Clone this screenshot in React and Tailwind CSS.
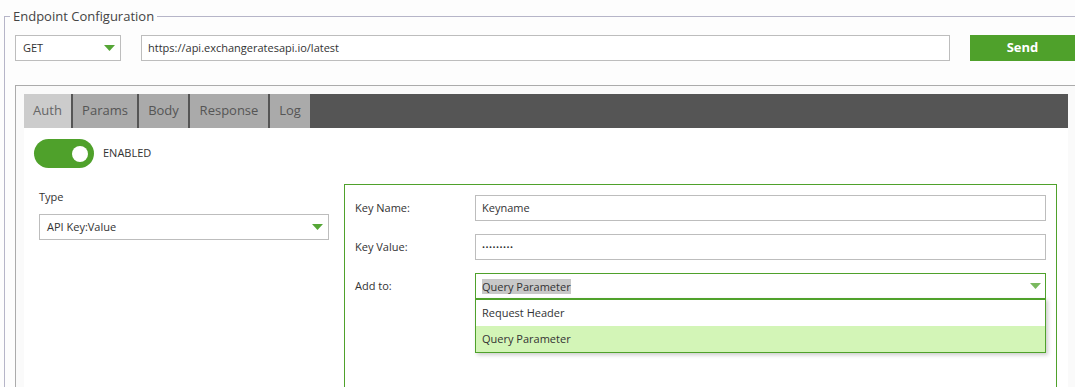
import React from 'react';

const Arrow = ({ className = 'fill-[#55a636]' }) => (
  <svg width="11" height="6" viewBox="0 0 11 6" className={className}>
    <path d="M0 0 H11 L5.5 6 Z" />
  </svg>
);

const Select = ({ value, width, arrow }) => (
  <div className={`flex items-center justify-between h-[26px] border border-[#bdbdbd] bg-white pl-[7px] pr-[5px] text-[11px] text-[#333] ${width}`}>
    <span>{value}</span>
    <Arrow className={arrow} />
  </div>
);

const tabs = [
  { label: 'Auth', w: 'w-[47px]', active: true },
  { label: 'Params', w: 'w-[64px]' },
  { label: 'Body', w: 'w-[49px]' },
  { label: 'Response', w: 'w-[78px]' },
  { label: 'Log', w: 'w-[40px]' },
];

export default function App() {
  return (
    <div className="h-[387px] w-[1075px] overflow-hidden bg-[#fdfdfd] text-[#333]" style={{ fontFamily: '"Open Sans", "Liberation Sans", sans-serif' }}>
      <fieldset className="mt-[7px] ml-[4px] w-[1110px] border border-[#b6b5c8]">
        <legend className="ml-[5px] px-[3px] text-[13px] leading-[18px] text-[#444]">Endpoint Configuration</legend>

        {/* Method / URL / Send */}
        <div className="mt-[10px] ml-[10px] flex gap-[20px]">
          <Select value="GET" width="w-[106px]" />
          <div className="flex h-[26px] w-[809px] items-center border border-[#bdbdbd] bg-white px-[6px] text-[11px]">
            https://api.exchangeratesapi.io/latest
          </div>
          <button className="h-[26px] w-[105px] bg-[#4fa12b] text-[13px] font-bold text-white">Send</button>
        </div>

        {/* Inner panel */}
        <div className="mt-[24px] ml-[10px] h-[400px] border-l border-t border-[#ababab] bg-[#fafafa] pt-[8px] pl-[8px]">
          <div className="w-[1044px]">
            <div className="flex h-[34px] gap-[2px] bg-[#555]">
              {tabs.map((t) => (
                <div
                  key={t.label}
                  className={`flex items-center justify-center text-[13px] ${t.w} ${t.active ? 'bg-[#cccccc] text-[#666]' : 'bg-[#aaaaaa] text-[#555]'}`}
                >
                  {t.label}
                </div>
              ))}
            </div>

            <div className="h-[300px] bg-white">
              {/* Toggle */}
              <div className="flex items-center pl-[10px] pt-[11px]">
                <div className="flex h-[29px] w-[60px] items-center justify-end rounded-full bg-[#4fa12b] pr-[6px]">
                  <div className="h-[16px] w-[16px] rounded-full bg-white" />
                </div>
                <span className="ml-[9px] text-[11px] text-[#333]">ENABLED</span>
              </div>

              <div className="mt-[16px] flex">
                {/* Type */}
                <div className="ml-[15px] w-[290px] pt-[4px]">
                  <div className="text-[11px] leading-[18px]">Type</div>
                  <div className="mt-[8px]">
                    <Select value="API Key:Value" width="w-[290px]" />
                  </div>
                </div>

                {/* Key config */}
                <div className="ml-[15px] h-[260px] w-[713px] border border-[#4fa12b] px-[10px] pt-[10px]">
                  <div className="flex flex-col gap-[13px]">
                    <div className="flex items-center">
                      <span className="w-[120px] text-[11px]">Key Name:</span>
                      <div className="flex h-[26px] flex-1 items-center border border-[#bdbdbd] px-[6px] text-[11px]">Keyname</div>
                    </div>
                    <div className="flex items-center">
                      <span className="w-[120px] text-[11px]">Key Value:</span>
                      <div className="flex h-[26px] flex-1 items-center border border-[#bdbdbd] px-[6px] text-[8px] tracking-[0.5px]">•••••••••</div>
                    </div>
                    <div className="flex items-center">
                      <span className="w-[120px] text-[11px]">Add to:</span>
                      <div className="relative flex-1">
                        <div className="flex h-[26px] items-center justify-between border border-[#4fa12b] pl-[6px] pr-[4px] text-[11px]">
                          <span className="bg-[#c8c8c8] leading-[15px]">Query Parameter</span>
                          <Arrow className="fill-[#7ab95f]" />
                        </div>
                        <div className="absolute left-0 right-0 top-[25px] border border-t-2 border-[#4fa12b] bg-white text-[11px] shadow-[2px_2px_4px_rgba(0,0,0,0.2)]">
                          <div className="flex h-[26px] items-center px-[6px]">Request Header</div>
                          <div className="flex h-[26px] items-center bg-[#d3f5b7] px-[6px]">Query Parameter</div>
                        </div>
                      </div>
                    </div>
                  </div>
                </div>
              </div>
            </div>
          </div>
        </div>
      </fieldset>
    </div>
  );
}
